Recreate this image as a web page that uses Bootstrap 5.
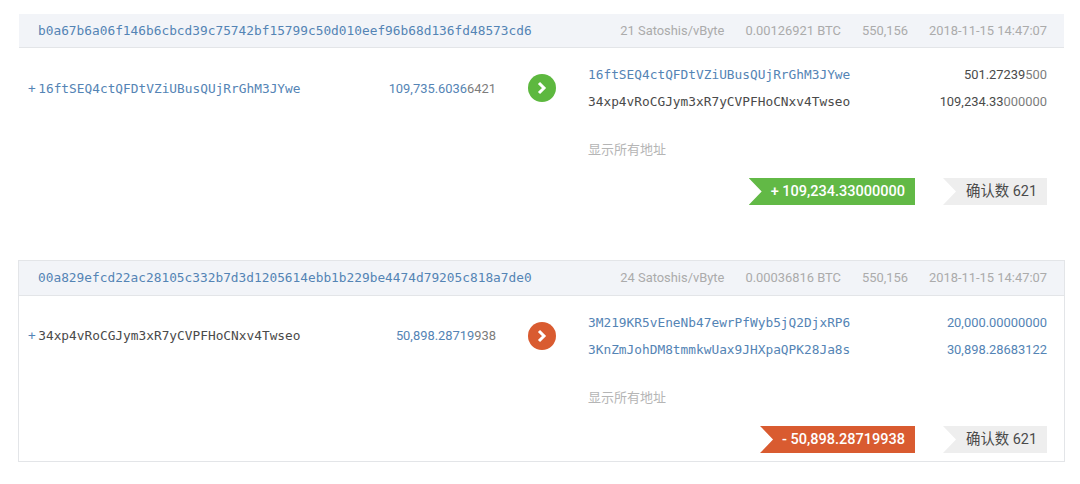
<!DOCTYPE html>
<html lang="zh">
<head>
<meta charset="utf-8">
<title>Transactions</title>
<link rel="stylesheet" href="https://cdn.jsdelivr.net/npm/bootstrap@5.3.0/dist/css/bootstrap.min.css">
<style>
body{background:#fff;font-family:Roboto,"Noto Sans CJK SC",sans-serif;font-size:12.9px;color:#4a4a4a;padding:13px 15px 0 18px;}
.tx-card{border-radius:0;border:1px solid transparent;margin-bottom:46px;--bs-card-inner-border-radius:0;}
.tx-card.tx-framed{border-color:#e3e5e8;}
.tx-head{background:#f2f4f8;border-bottom:1px solid #e3e5e8;height:34px;padding:0 17px 0 19px;border-radius:0!important;}
.tx-framed .tx-head{height:35px;}
.tx-gap{gap:21px;color:#ababab;}
.mono{font-family:"DejaVu Sans Mono",monospace;font-size:12.82px;}
.tx-blue{color:#5484b5;}
.tx-dark{color:#4a4a4a;}
.tail{opacity:.72;}
.plus{margin-right:2.5px;}
.tx-body{padding:13px 17px 8px 0;}
.tx-left{width:477px;padding-left:9px;}
.tx-low{padding-top:1px;}
.circle{width:28px;height:28px;border-radius:50%;margin:0 32px;flex:none;}
.c-green{background:#5db83f;}
.c-red{background:#d95b30;}
.tx-right{flex:1;min-width:0;}
.tx-line{height:27px;}
.show-all{font-family:"Noto Sans CJK SC",sans-serif;font-size:13px;color:#b5b5b5;text-decoration:none;display:block;margin:24px 0 19px 569px;line-height:20px;}
.ribbon{height:27px;padding:0 10px 0 22px;clip-path:polygon(0 0,100% 0,100% 100%,0 100%,13px 50%);color:#fff;font-size:14.5px;font-weight:500;}
.r-green{background:#62b946;}
.r-red{background:#d95b30;}
.r-conf{background:#eeeeee;color:#4a4a4a;margin-left:28px;padding:0 10px 0 23px;font-size:14.4px;font-weight:400;}
</style>
</head>
<body>
<div class="card tx-card">
  <div class="card-header tx-head d-flex align-items-center justify-content-between">
    <a class="mono tx-blue text-decoration-none" href="#">b0a67b6a06f146b6cbcd39c75742bf15799c50d010eef96b68d136fd48573cd6</a>
    <div class="d-flex tx-gap"><span>21 Satoshis/vByte</span><span>0.00126921 BTC</span><span>550,156</span><span>2018-11-15 14:47:07</span></div>
  </div>
  <div class="tx-body">
    <div class="d-flex align-items-center">
      <div class="tx-left tx-low d-flex justify-content-between align-items-center">
        <span class="mono tx-blue"><span class="plus">+</span>16ftSEQ4ctQFDtVZiUBusQUjRrGhM3JYwe</span>
        <span class="tx-blue">109,735.6036<span class="tx-dark tail">6421</span></span>
      </div>
      <div class="circle c-green d-flex align-items-center justify-content-center">
        <svg width="12" height="14" viewBox="0 0 12 14" aria-hidden="true"><path d="M3 2 L8 7 L3 12" fill="none" stroke="#fff" stroke-width="3"/></svg>
      </div>
      <div class="tx-right">
        <div class="tx-line d-flex justify-content-between align-items-center"><span class="mono tx-blue">16ftSEQ4ctQFDtVZiUBusQUjRrGhM3JYwe</span><span>501.27239<span class="tail">500</span></span></div>
        <div class="tx-line d-flex justify-content-between align-items-center"><span class="mono tx-dark">34xp4vRoCGJym3xR7yCVPFHoCNxv4Twseo</span><span>109,234.33<span class="tail">000000</span></span></div>
      </div>
    </div>
    <a class="show-all" href="#">显示所有地址</a>
    <div class="d-flex justify-content-end">
      <div class="ribbon r-green d-flex align-items-center">+ 109,234.33000000</div>
      <div class="ribbon r-conf d-flex align-items-center">确认数 621</div>
    </div>
  </div>
</div>
<div class="card tx-card tx-framed">
  <div class="card-header tx-head d-flex align-items-center justify-content-between">
    <a class="mono tx-blue text-decoration-none" href="#">00a829efcd22ac28105c332b7d3d1205614ebb1b229be4474d79205c818a7de0</a>
    <div class="d-flex tx-gap"><span>24 Satoshis/vByte</span><span>0.00036816 BTC</span><span>550,156</span><span>2018-11-15 14:47:07</span></div>
  </div>
  <div class="tx-body">
    <div class="d-flex align-items-center">
      <div class="tx-left d-flex justify-content-between align-items-center">
        <span class="mono tx-dark"><span class="tx-blue plus">+</span>34xp4vRoCGJym3xR7yCVPFHoCNxv4Twseo</span>
        <span class="tx-blue">50,898.28719<span class="tx-dark tail">938</span></span>
      </div>
      <div class="circle c-red d-flex align-items-center justify-content-center">
        <svg width="12" height="14" viewBox="0 0 12 14" aria-hidden="true"><path d="M3 2 L8 7 L3 12" fill="none" stroke="#fff" stroke-width="3"/></svg>
      </div>
      <div class="tx-right">
        <div class="tx-line d-flex justify-content-between align-items-center"><span class="mono tx-blue">3M219KR5vEneNb47ewrPfWyb5jQ2DjxRP6</span><span class="tx-blue">20,000.00000000</span></div>
        <div class="tx-line d-flex justify-content-between align-items-center"><span class="mono tx-blue">3KnZmJohDM8tmmkwUax9JHXpaQPK28Ja8s</span><span class="tx-blue">30,898.28683122</span></div>
      </div>
    </div>
    <a class="show-all" href="#">显示所有地址</a>
    <div class="d-flex justify-content-end">
      <div class="ribbon r-red d-flex align-items-center">- 50,898.28719938</div>
      <div class="ribbon r-conf d-flex align-items-center">确认数 621</div>
    </div>
  </div>
</div>
</body>
</html>
